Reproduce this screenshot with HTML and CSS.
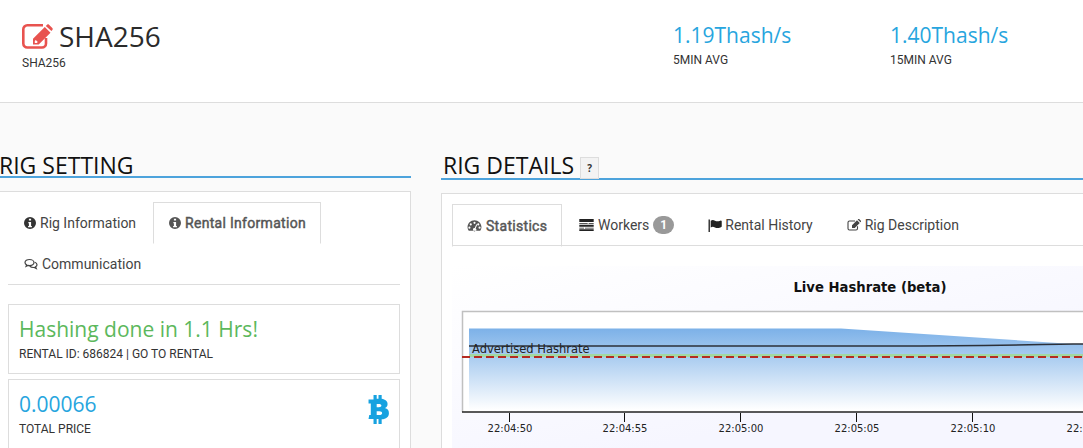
FILE: index.html
```html
<!DOCTYPE html>
<html lang="en">
<head>
<meta charset="utf-8">
<title>SHA256</title>
<link rel="stylesheet" href="styles.css">
</head>
<body>
<svg class="defs" width="0" height="0">
  <symbol id="i-brand" viewBox="0 0 31 25"><path fill="none" stroke="currentColor" stroke-width="2.600" d="M24 14v5.500a4 4 0 0 1-4 4H5.300a4 4 0 0 1-4-4V5.300a4 4 0 0 1 4-4H21"/><path d="M11 20.500v-5.700L22.800 3l5.700 5.700L16.700 20.500zM12.800 17v2h2l1-1-2-2zM23.800 2l1.300-1.300c.6-.6 1.300-.6 1.900 0l3.300 3.300c.6.600.6 1.300 0 1.900l-.9 1z"/></symbol>
  <symbol id="i-info" viewBox="1 1 22 22"><path fill-rule="evenodd" d="M12 1a11 11 0 1 0 0 22 11 11 0 0 0 0-22zM10 4h4v3.500h-4zM9 10h5v7.500h1.500V20h-7v-2.500H10V12.500H9z"/></symbol>
  <symbol id="i-comments" viewBox="0 0 28 24"><path fill="none" stroke="currentColor" stroke-width="2.400" d="M11 3c-5 0-9 2.600-9 6 0 2 1.300 3.700 3.300 4.800L4.200 16.600l3.800-1.800c1 .2 2 .3 3 .3 5 0 9-2.700 9-6s-4-6.100-9-6.100z"/><path fill="none" stroke="currentColor" stroke-width="2.400" d="M21.500 8.500c2.700 1 4.500 2.900 4.500 5 0 1.700-1.100 3.200-2.800 4.200l1.300 3.300-4-2.200c-3.500.5-7-.5-9-2.800"/></symbol>
  <symbol id="i-gauge" viewBox="0 0 28 24"><path fill-rule="evenodd" d="M14 2C6.800 2 1 7.800 1 15c0 2.800.9 5.200 2.400 7h21.200c1.500-1.800 2.400-4.200 2.400-7 0-7.200-5.800-13-13-13zM14 5a2 2 0 1 1 0 4 2 2 0 0 1 0-4zM7 8a2 2 0 1 1 0 4 2 2 0 0 1 0-4zM4.500 14a2 2 0 1 1 0 4 2 2 0 0 1 0-4zM23.500 14a2 2 0 1 1 0 4 2 2 0 0 1 0-4zM21 8a2 2 0 1 1 0 4 2 2 0 0 1 0-4zM17.500 9.500l1.700.7-3 7.300a3 3 0 1 1-1.800-.7z"/></symbol>
  <symbol id="i-tasks" viewBox="0 0 24 20"><path d="M0 0h24v5H0zM0 6.500h14v1.500H0zM15.500 6.500H24v1.500h-8.500zM0 9.500h24v3.500H0zM0 14.500h8v1.500H0zM9.500 14.500H24v1.500H9.500zM0 17h24v3H0z"/></symbol>
  <symbol id="i-flag" viewBox="0 0 26 24"><path d="M1 1h2.500v23H1zM5 3c3-1.500 5-1.500 8 0s5 1.500 10 0c1-.3 2.500 0 2.500 1v10c0 1-1.500 1.400-2.500 1.700-5 1.500-7 1.300-10-.2s-5-1.500-8 0z"/></symbol>
  <symbol id="i-edit" viewBox="0 0 28 24"><path fill="none" stroke="currentColor" stroke-width="2.200" stroke-linejoin="round" d="M21 14.500V19a3 3 0 0 1-3 3H5a3 3 0 0 1-3-3V7a3 3 0 0 1 3-3h11"/><path d="M20 2.500l5.500 5.500-10 10H10v-5.500zM21.500 1l1-1c.6-.4 1.300-.3 1.800.2l3.500 3.500c.5.500.5 1.200 0 1.800l-1 1z"/></symbol>
  <symbol id="i-btc" viewBox="0 0 22 32"><path fill-rule="evenodd" d="M5.500 0h3.500v4h2V0h3.500v4.200c4 .6 6.500 2.700 6.500 5.600 0 2.200-1 3.700-3 4.600 3.200.8 4.500 2.700 4.500 5.600 0 4-3 6.300-8 6.800V32H11v-5.500H9V32H5.500v-5.500H0l.8-4.300H2.500V9.300H0V5h5.500zM9 9.800v3.700h2.500c1.600 0 2.700-.7 2.700-1.900s-1.100-1.800-2.700-1.800zM9 18v4h3c1.800 0 3-.8 3-2s-1.200-2-3-2z"/></symbol>
</svg>

<header class="top">
  <div class="brand">
    <h1 class="brand-title"><svg class="brand-icon"><use href="#i-brand"/></svg>SHA256</h1>
    <div class="caption">SHA256</div>
  </div>
  <div class="stat">
    <div class="stat-value">1.19Thash/s</div>
    <div class="caption">5MIN AVG</div>
  </div>
  <div class="stat">
    <div class="stat-value">1.40Thash/s</div>
    <div class="caption">15MIN AVG</div>
  </div>
</header>

<main class="main">
  <section class="col-left">
    <h2 class="section-title">RIG SETTING</h2>
    <div class="panel panel-left">
      <ul class="tabs tabs-left">
        <li class="tab"><svg class="ico ico-info"><use href="#i-info"/></svg>Rig Information</li>
        <li class="tab active"><svg class="ico ico-info"><use href="#i-info"/></svg>Rental Information</li>
        <li class="tab"><svg class="ico ico-com"><use href="#i-comments"/></svg>Communication</li>
      </ul>
      <div class="box">
        <div class="box-value green">Hashing done in 1.1 Hrs!</div>
        <div class="caption">RENTAL ID: 686824 | GO TO RENTAL</div>
      </div>
      <div class="box box-price">
        <div>
          <div class="box-value blue">0.00066</div>
          <div class="caption">TOTAL PRICE</div>
        </div>
        <svg class="btc"><use href="#i-btc"/></svg>
      </div>
    </div>
  </section>

  <section class="col-right">
    <h2 class="section-title">RIG DETAILS <span class="help">?</span></h2>
    <div class="panel panel-right">
      <ul class="tabs tabs-right">
        <li class="tab active"><svg class="ico ico-gauge"><use href="#i-gauge"/></svg>Statistics</li>
        <li class="tab"><svg class="ico ico-tasks"><use href="#i-tasks"/></svg>Workers <span class="badge">1</span></li>
        <li class="tab"><svg class="ico ico-flag"><use href="#i-flag"/></svg>Rental History</li>
        <li class="tab"><svg class="ico ico-edit"><use href="#i-edit"/></svg>Rig Description</li>
      </ul>
      <svg class="chart" width="836" height="190" viewBox="0 0 836 190">
        <defs>
          <linearGradient id="bg" x1="0" y1="0" x2="1" y2="1"><stop offset="0" stop-color="#fff"/><stop offset=".6" stop-color="#f6f6ff"/></linearGradient>
          <linearGradient id="area" x1="0" y1="0" x2="0" y2="1"><stop offset="0" stop-color="#7cb1e8"/><stop offset="1" stop-color="#fff"/></linearGradient>
        </defs>
        <rect width="836" height="190" fill="url(#bg)"/>
        <text class="chart-title" x="418" y="26" text-anchor="middle">Live Hashrate (beta)</text>
        <rect x="10.500" y="45" width="820" height="101" fill="#fff"/>
        <path d="M10.500 146V45.500H836" fill="none" stroke="#c0c0c0" stroke-width="1.500"/>
        <path d="M17 62.500H389L621 78H836V144H17z" fill="url(#area)"/>
        <path d="M17 89.500H836" stroke="#a2d8a2" stroke-width="3"/>
        <path d="M17 80H440C520 80 560 79 621 78H836" fill="none" stroke="#2c3038" stroke-width="1.500"/>
        <text class="chart-label" x="20" y="87">Advertised Hashrate</text>
        <path d="M10 91H836" stroke="#b52a20" stroke-width="2" stroke-dasharray="8 4"/>
        <path d="M10 146H836" stroke="#222" stroke-width="1.500"/>
        <g class="ticks">
          <path d="M57.500 147v9M172.500 147v9M288.500 147v9M404.500 147v9M520.500 147v9M636.500 147v9" stroke="#111"/>
          <text x="58" y="166">22:04:50</text>
          <text x="173" y="166">22:04:55</text>
          <text x="289" y="166">22:05:00</text>
          <text x="405" y="166">22:05:05</text>
          <text x="521" y="166">22:05:10</text>
          <text x="637" y="166">22:05:15</text>
        </g>
      </svg>
    </div>
  </section>
</main>
</body>
</html>
```

FILE: styles.css
```css
* { box-sizing: border-box; }
html, body { margin: 0; height: 448px; overflow: hidden; }
body { background: #fafafa; font-family: Roboto, sans-serif; color: #333; }
.defs { position: absolute; }

.top { display: flex; height: 103px; background: #fff; border-bottom: 1px solid #ddd; padding: 18px 0 0 22px; }
.brand { width: 651px; flex: none; }
.brand-title { margin: 0; display: flex; align-items: center; font: 400 28px/36px "Open Sans", sans-serif; color: #2b2b2b; }
.brand-icon { width: 31px; height: 25px; margin-right: 6px; color: #e8534f; fill: currentColor; flex: none; }
.caption { font-size: 12px; line-height: 16px; color: #333; }
.brand .caption { margin-top: 1px; }
.stat { width: 218px; flex: none; padding-top: 3px; }
.stat + .stat { margin-left: -1px; }
.stat-value { font: 400 21px/28px "Open Sans", sans-serif; color: #27a5de; }
.stat .caption { margin-top: 3px; }

.main { display: flex; align-items: flex-start; margin-top: 47px; margin-left: -3px; }
.section-title { margin: 0; padding-top: 2px; font: 400 23px/27px "Open Sans", sans-serif; color: #111; border-bottom: 2px solid #4da3dc; }
.col-left { width: 414px; flex: none; }
.col-left .section-title { padding-left: 2px; height: 28px; }
.col-right { width: 900px; flex: none; margin-left: 30px; }
.col-right .section-title { padding-left: 2px; height: 30px; }
.help { display: inline-block; width: 19px; height: 22px; background: #f3f3f3; border: 1px solid #ddd; font: 700 10px/21px "Open Sans", sans-serif; text-align: center; vertical-align: 2px; color: #333; }

.panel { background: #fff; border: 1px solid #ddd; margin-top: 13px; }
.panel-left { padding: 10px; height: 300px; }
.panel-right { padding: 10px; height: 300px; }

.tabs { display: flex; flex-wrap: wrap; list-style: none; margin: 0; padding: 0; border-bottom: 1px solid #ddd; }
.tab { display: flex; align-items: center; height: 41px; padding: 0 16px; font-size: 14px; color: #444; white-space: nowrap; }
.tab.active { -webkit-text-stroke: .45px currentColor; letter-spacing: .3px; color: #555; border: 1px solid #ddd; border-bottom: 1px solid #fff; margin-bottom: -1px; height: 42px; padding: 0 15px; }
.tabs-left { height: 83px; }
.tabs-left .tab:first-child { width: 145px; }
.tabs-left .tab.active { width: 168px; }
.tabs-right { height: 42px; }
.tabs-right .tab { padding: 0 17px; height: 42px; }
.tabs-right .tab.active { padding: 0 14px; width: 110px; height: 43px; }

.ico { fill: currentColor; flex: none; margin-right: 4px; }
.ico-info { width: 12px; height: 12px; color: #333; }
.tab.active .ico-info { color: #555; }
.ico-com { width: 14px; height: 12px; }
.ico-gauge { width: 15px; height: 13px; }
.ico-tasks { width: 15px; height: 12px; color: #222; }
.ico-flag { width: 14px; height: 13px; color: #222; margin-right: 3px; }
.ico-edit { width: 14px; height: 12px; }
.badge { display: inline-block; width: 21px; height: 18px; margin-left: 4px; border-radius: 9px; background: #999; color: #fff; font: 700 12px/18px Roboto, sans-serif; text-align: center; }

.box { border: 1px solid #ddd; padding: 9px 10px 10px; margin-top: 19px; height: 70px; }
.box + .box { margin-top: 5px; }
.box-price { display: flex; justify-content: space-between; height: 90px; }
.box-value { font: 400 21px/30px "Open Sans", sans-serif; }
.green { color: #5cb85c; }
.blue { color: #27a5de; }
.box .caption { margin-top: 2px; }
.btc { width: 21px; height: 29px; margin-top: 6px; fill: #17a2e0; }

.chart { display: block; margin-top: 20px; }
.chart text { font-family: "DejaVu Sans", sans-serif; }
.chart .chart-title { font-size: 13.200px; font-weight: 700; fill: #111; }
.chart .chart-label { font-size: 11.500px; fill: #222; }
.ticks text { font-size: 10px; text-anchor: middle; fill: #222; }
```
